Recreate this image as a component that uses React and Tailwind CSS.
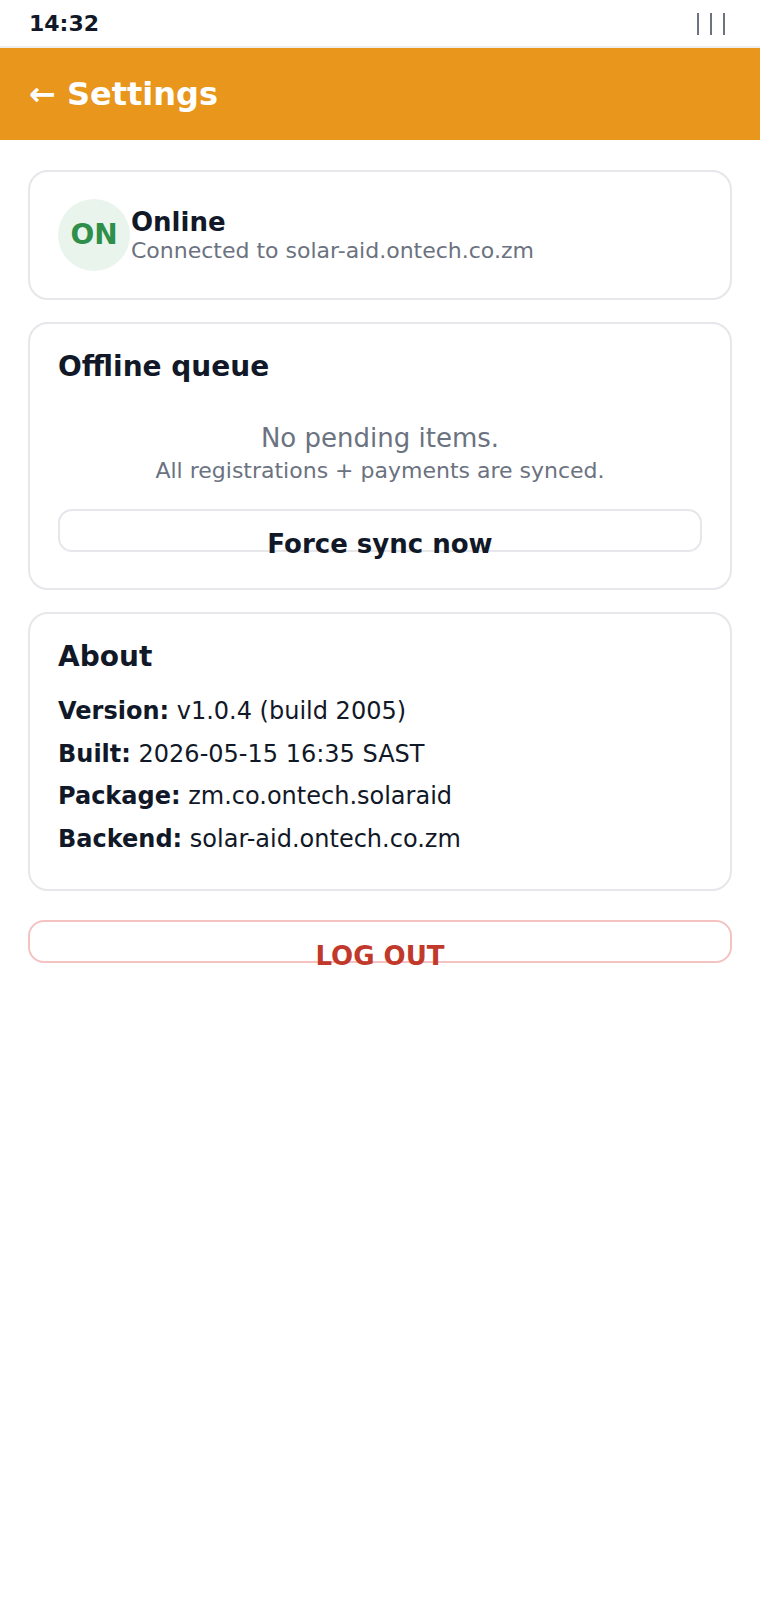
import React from "react"

const StatusBar = () => (
  <div className="flex h-[48px] items-center justify-between border-b-2 border-[#eeeeee] pt-[2px] pl-[29px] pr-[35px]">
    <span className="text-[22px] font-bold leading-[24px] text-[#111827]">14:32</span>
    <div className="flex gap-[10.5px]">
      <span className="h-[22px] w-[2.5px] bg-[#6b7280]" />
      <span className="h-[22px] w-[2.5px] bg-[#6b7280]" />
      <span className="h-[22px] w-[2.5px] bg-[#6b7280]" />
    </div>
  </div>
)

const Card = ({ children, className = "" }) => (
  <div className={`mx-[28px] rounded-[20px] border-2 border-[#e5e7eb] bg-white px-[28px] ${className}`}>
    {children}
  </div>
)

const Row = ({ label, value }) => (
  <p className="text-[24px] leading-[32px] text-[#111827]">
    <span className="font-bold">{label}</span> {value}
  </p>
)

export default function App() {
  return (
    <div className="min-h-[1600px] bg-white font-['DejaVu_Sans',sans-serif]">
      <StatusBar />

      <div className="flex h-[92px] items-center bg-[#e8961c] px-[29px]">
        <h1 className="text-[32px] font-bold text-white">← Settings</h1>
      </div>

      <div className="pt-[30px]">
        <Card className="flex items-center py-[27px]">
          <div className="flex h-[72px] w-[72px] shrink-0 items-center justify-center rounded-full bg-[#e9f5ec]">
            <span className="text-[28px] font-bold text-[#2f8f4a]">ON</span>
          </div>
          <div className="ml-[1px] flex flex-col">
            <span className="text-[26px] font-bold leading-[31px] text-[#111827]">Online</span>
            <span className="text-[22px] leading-[26px] text-[#6b7280]">Connected to solar-aid.ontech.co.zm</span>
          </div>
        </Card>

        <Card className="mt-[22px] pt-[28px] pb-[36px]">
          <h2 className="text-[28px] font-bold leading-[29px] text-[#111827]">Offline queue</h2>
          <div className="mt-[40px] mb-[23px] flex flex-col items-center text-[#6b7280]">
            <p className="text-[26px] leading-[34px]">No pending items.</p>
            <p className="text-[22px] leading-[31px]">All registrations + payments are synced.</p>
          </div>
          <div className="h-[43px] rounded-[14px] border-2 border-[#e5e7eb] pt-[18px] text-center text-[26px] font-bold leading-[30px] text-[#111827]">
            Force sync now
          </div>
        </Card>

        <Card className="mt-[22px] pt-[28px] pb-[34px]">
          <h2 className="text-[28px] font-bold leading-[29px] text-[#111827]">About</h2>
          <div className="mt-[24px] flex flex-col gap-[10.5px]">
            <Row label="Version:" value="v1.0.4 (build 2005)" />
            <Row label="Built:" value="2026-05-15 16:35 SAST" />
            <Row label="Package:" value="zm.co.ontech.solaraid" />
            <Row label="Backend:" value="solar-aid.ontech.co.zm" />
          </div>
        </Card>

        <div className="mx-[28px] mt-[29px] h-[43px] rounded-[16px] border-2 border-[#f5c2c2] pt-[19px] text-center text-[26px] font-bold leading-[30px] text-[#c0392b]">
          LOG OUT
        </div>
      </div>
    </div>
  )
}
